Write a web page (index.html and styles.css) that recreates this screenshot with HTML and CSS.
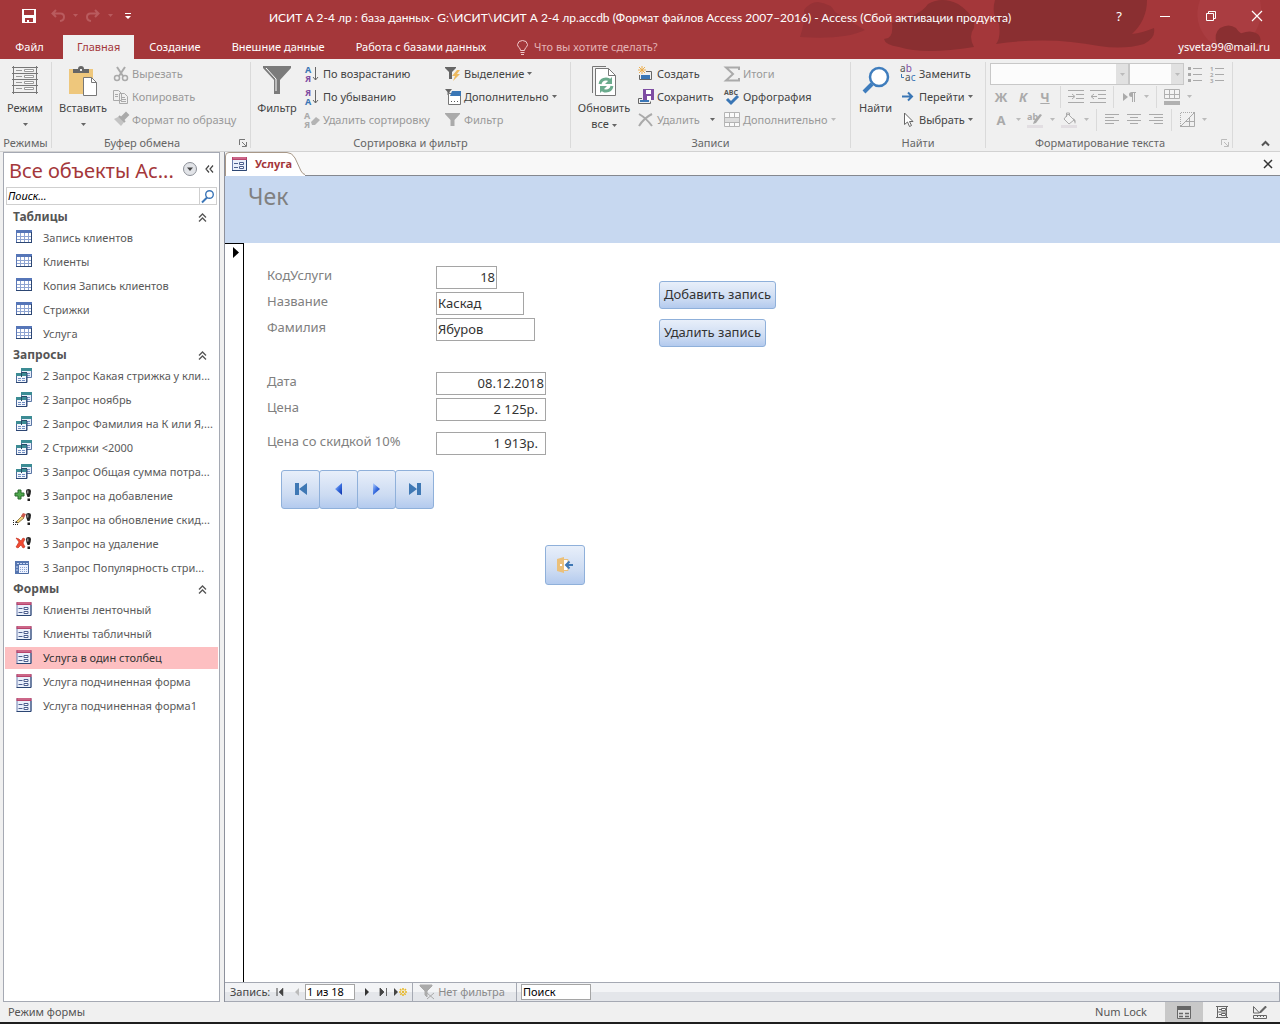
FILE: index.html
```html
<!DOCTYPE html>
<html lang="ru">
<head>
<meta charset="utf-8">
<title>ИСИТ А 2-4 лр - Access</title>
<link rel="stylesheet" href="styles.css">
</head>
<body>
<svg class="sprite" aria-hidden="true">
  <defs>
    <linearGradient id="g-sheet" x1="0" y1="0" x2="1" y2="1"><stop offset="0" stop-color="#fff"/><stop offset="1" stop-color="#c3d0ee"/></linearGradient>
    <linearGradient id="g-arrow" x1="0" y1="0" x2="1" y2="1"><stop offset="0" stop-color="#b9d3ff"/><stop offset=".5" stop-color="#3a6fe0"/><stop offset="1" stop-color="#0b2fa8"/></linearGradient>
  </defs>
  <symbol id="drop" viewBox="0 0 5 3"><path d="M0 0h5L2.5 3z" fill="currentColor"/></symbol>
  <symbol id="table" viewBox="0 0 16 14"><path d="M.5.500h15v12h-15z" fill="#fff" stroke="#5b77b5"/><path d="M0 0h16v3H0z" fill="#5676b8"/><path d="M1 6.500h14M1 9.500h14M4.500 3v10M8.500 3v10M12.500 3v10" stroke="#8ea4d2"/><path d="M0 12.500h16M15.500 2v11" stroke="#2c4673"/></symbol>
  <symbol id="query" viewBox="0 0 16 15"><path d="M5.500.500h10v9h-10z" fill="#e6edf9" stroke="#5b77a5"/><path d="M5 0h11v3H5z" fill="#3c8c94"/><path d="M10 5.500h4M10 7.500h4" stroke="#7b96c8"/><path d="M.5 5.500h10v9H.5z" fill="#f2f6fc" stroke="#4e6a9a"/><path d="M0 5h11v3H0z" fill="#3c8c94"/><path d="M2 10.500h3M6 10.500h3M2 12.500h3M6 12.500h3" stroke="#6f8cc2"/><path d="M5.500 9V4.500H11" fill="none" stroke="#274a66"/><path d="M0 14.500h11V5" fill="none" stroke="#2c4673"/></symbol>
  <symbol id="form" viewBox="0 0 15 14"><path d="M.5.500h14v13H.5z" fill="#eaf0fb" stroke="#6d7fae"/><path d="M0 0h15v3H0z" fill="#b8446c"/><path d="M1 1h13" stroke="#e08aa5"/><path d="M2 6.500h4M2 10.500h4" stroke="#4d5f8e"/><path d="M7.500 5.500h4v2h-4zM7.500 9.500h4v2h-4z" fill="#fff" stroke="#4d5f8e"/><path d="M0 13.500h14.500V3" fill="none" stroke="#2c4673"/></symbol>
  <symbol id="bang" viewBox="0 0 5 12"><path d="M0 2Q0 0 2.500 0T5 2Q5 5 3.500 8h-2Q0 5 0 2z" fill="#222"/><path d="M1 1.500h1.500v3H1z" fill="#8a8a8a"/><path d="M1.500 9.500h2.500v2.500H1.500z" fill="#222"/></symbol>
  <symbol id="q-add" viewBox="0 0 18 14"><path d="M5 2h3v3h3v3H8v3H5V8H2V5h3z" fill="#4fa84c" stroke="#2a6a2e"/><use href="#bang" x="13" y="1" width="5" height="12"/></symbol>
  <symbol id="q-upd" viewBox="0 0 18 14"><path d="M0 8.500h1M0 10.500h1M0 12.500h1M2 12.500h1M4 12.500h1" stroke="#222"/><path d="M3 10l6-6 2 2-6 5z" fill="#f1d27a" stroke="#7b6432" stroke-width=".8"/><path d="M8 4l2-3 3 1-2 4z" fill="#cc5a4d"/><path d="M2 11l1-2 2 2z" fill="#333"/><use href="#bang" x="13" y="1" width="5" height="12"/></symbol>
  <symbol id="q-del" viewBox="0 0 18 14"><path d="M3 2l3 1 2 2 2-3 2 1-2 4 2 4-2 1-2-3-3 3-2-1 3-5z" fill="#f04a32" stroke="#c02818" stroke-width=".6"/><use href="#bang" x="13" y="1" width="5" height="12"/></symbol>
  <symbol id="q-cross" viewBox="0 0 18 13"><path d="M2.500.500h13v12H2.500z" fill="#eef3ff" stroke="#49689f"/><path d="M2 0h14v4H6v9H2z" fill="#5676b0"/><path d="M4 2.500h11M4 5v6" stroke="#c8d8f4" stroke-dasharray="2 1"/><path d="M7 6.500h7M7 8.500h7M7 10.500h7" stroke="#8aa3d2" stroke-dasharray="1 1"/></symbol>
  <symbol id="collapse" viewBox="0 0 9 9"><path d="M1 4.500l3.500-3.500L8 4.500M1 8.500L4.500 5 8 8.500" fill="none" stroke="#555" stroke-width="1.300"/></symbol>
  <symbol id="launcher" viewBox="0 0 8 8"><path d="M.5 6V.500H6M3 3l4 4M7.500 3v4.500H3" fill="none" stroke="currentColor"/></symbol>
</svg>

<header class="app-head">
  <svg class="clouds" viewBox="0 0 500 59" aria-hidden="true">
    <path fill="#aa3d41" d="M420 0h60q5 25-12 40t-40 0q-16-18-8-40z"/>
    <path fill="#963236" d="M20 37q6-18 4-27Q30 2 38 2q14 2 17 10l30 18q-20 10-65 7z"/>
    <path fill="#8a2f31" d="M104 39q10 0 8-16Q140 16 148 4q14-8 30 0 18 12 16 24-6 8 0 19-50 8-75 0-14-2-15-8z"/>
    <path fill="#8a2f31" d="M216 44q5-6 3-20-8-10-4-24h152q0 20-15 34 10-1 22-6 2 10-10 16-20 6-45 2-50-10-103-2z"/>
    <path fill="#8a2f31" d="M437 44q-4-10 3-16 9-5 16 0 4 6 6 5 8-3 14 0 6 3 4 10-22 8-43 1z"/>
  </svg>
  <div class="title-bar">
    <div class="quick">
      <button class="q-btn q-save" aria-label="Сохранить"><svg width="14" height="14" viewBox="0 0 14 14"><path fill="#fff" fill-rule="evenodd" d="M0 0h14v14H0zM2 1v5h10V1zM3 9v4h2v-2h2v2h4V9z"/></svg></button>
      <button class="q-btn dim" aria-label="Отменить"><svg width="14" height="13" viewBox="0 0 14 13"><path d="M5 1L1.500 4.500 5 8M2 4.500h7.500q3.500 0 3.500 3.500T9 12" fill="none" stroke="currentColor" stroke-width="2"/></svg></button>
      <button class="q-arrow dim" aria-label="Список отмены"><svg width="5" height="3"><use href="#drop"/></svg></button>
      <button class="q-btn dim" aria-label="Вернуть"><svg width="14" height="13" viewBox="0 0 14 13"><path d="M9 1l3.500 3.500L9 8M12 4.500H4.500Q1 4.500 1 8t4 4" fill="none" stroke="currentColor" stroke-width="2"/></svg></button>
      <button class="q-arrow dim" aria-label="Список возврата"><svg width="5" height="3"><use href="#drop"/></svg></button>
      <button class="q-btn" aria-label="Настройка панели"><svg width="6" height="6" viewBox="0 0 6 6"><path fill="#fff" d="M0 0h6v1H0zM0 3h6L3 6z"/></svg></button>
    </div>
    <h1 class="app-title">ИСИТ А 2-4 лр : база данных- G:\ИСИТ\ИСИТ А 2-4 лр.accdb (Формат файлов Access 2007–2016) - Access (Сбой активации продукта)</h1>
    <div class="win">
      <button>?</button>
      <button aria-label="Свернуть"><svg width="10" height="10"><path d="M0 5.500h10" stroke="#fff"/></svg></button>
      <button aria-label="Восстановить"><svg width="10" height="10" viewBox="0 0 10 10"><path d="M.5 2.500h7v7h-7zM2.500 2.500v-2h7v7h-2" fill="none" stroke="#fff"/></svg></button>
      <button aria-label="Закрыть"><svg width="10" height="10"><path d="M0 0l10 10M10 0L0 10" stroke="#fff" stroke-width="1.200"/></svg></button>
    </div>
  </div>
  <nav class="tabs">
    <button class="tab file">Файл</button>
    <button class="tab on">Главная</button>
    <button class="tab">Создание</button>
    <button class="tab">Внешние данные</button>
    <button class="tab">Работа с базами данных</button>
    <button class="tab tell"><svg width="11" height="15" viewBox="0 0 11 15"><path d="M3.500 10.500Q3.500 9 2 7.500.500 6 .500 4.500 1 .500 5.500.500t5 4Q10.500 6 9 7.500 7.500 9 7.500 10.500zM3.500 12.500h4M4 14.500h3" fill="none" stroke="#f0c8ca"/></svg>Что вы хотите сделать?</button>
    <a class="account" href="#">ysveta99@mail.ru</a>
  </nav>
</header>

<section class="ribbon">
  <div class="group g-modes">
    <div class="tools">
      <button class="big"><svg width="26" height="28" viewBox="0 0 26 28"><path d="M1.500 0v28M24.500 0v28M0 1.500h26M0 7.500h26M0 13.500h26M0 19.500h26M0 26.500h26" stroke="#777"/><path d="M4 4.500h6M4 10.500h6M4 16.500h6M4 22.500h6" stroke="#999"/><path d="M12.500 3.500h9v2h-9zM12.500 9.500h9v2h-9zM12.500 15.500h9v2h-9zM12.500 21.500h9v2h-9z" fill="#fff" stroke="#999"/></svg><span>Режим</span><svg class="d" width="5" height="3"><use href="#drop"/></svg></button>
    </div>
    <h2>Режимы</h2>
  </div>

  <div class="group g-clip">
    <div class="tools">
      <button class="big"><svg width="28" height="30" viewBox="0 0 28 30"><path d="M0 3h24v25H0z" fill="#eec77c"/><path d="M4 7V3h5Q9 0 12 0t3 3h5v4z" fill="#666"/><path d="M11 3h2v2h-2z" fill="#eee"/><path d="M14.500 11.500h8l5 5v13h-13z" fill="#fff" stroke="#777"/><path d="M22.500 11.500v5h5" fill="none" stroke="#777"/></svg><span>Вставить</span><svg class="d" width="5" height="3"><use href="#drop"/></svg></button>
      <div class="stack">
        <button class="small" disabled><svg width="16" height="16" viewBox="0 0 16 16"><path d="M4 1l6 9M12 1l-6 9" stroke="#aaa" stroke-width="2"/><circle cx="4" cy="12" r="2.500" fill="none" stroke="#aaa" stroke-width="1.500"/><circle cx="12" cy="12" r="2.500" fill="none" stroke="#aaa" stroke-width="1.500"/></svg>Вырезать</button>
        <button class="small" disabled><svg width="16" height="16" viewBox="0 0 16 16"><path d="M.5 1.500h5l3 3v7h-8zM6.500 4.500h5l3 3v7h-8z" fill="#f0f0f0" stroke="#aaa"/><path d="M2 5.500h3M2 7.500h3M8 8.500h4M8 10.500h5M8 12.500h5" stroke="#aaa"/></svg>Копировать</button>
        <button class="small" disabled><svg width="16" height="16" viewBox="0 0 16 16"><path d="M1 7l6-3 5 5-4 5z" fill="#c4c4c4"/><path d="M9 5l4-4 2 2-4 4zM6 4l6 6" stroke="#aaa" stroke-width="2" fill="#aaa"/></svg>Формат по образцу</button>
      </div>
    </div>
    <h2>Буфер обмена</h2>
    <button class="launch" aria-label="Буфер обмена: параметры"><svg width="8" height="8"><use href="#launcher"/></svg></button>
  </div>

  <div class="group g-sort">
    <div class="tools">
      <button class="big"><svg width="28" height="28" viewBox="0 0 28 28"><path d="M0 0h28v2L17 14v14h-6V14L0 2z" fill="#7b7b7b"/><path d="M3 2l10 11v12" fill="none" stroke="#fff"/></svg><span>Фильтр</span></button>
      <div class="stack s-sort">
        <button class="small"><svg width="16" height="18" viewBox="0 0 16 18"><text class="gl blue" x="1" y="8">А</text><text class="gl violet" x="1" y="17">Я</text><path d="M11.500 2v13M9 12l2.500 3L14 12" fill="none" stroke="#666"/></svg>По возрастанию</button>
        <button class="small"><svg width="16" height="18" viewBox="0 0 16 18"><text class="gl violet" x="1" y="8">Я</text><text class="gl blue" x="1" y="17">А</text><path d="M11.500 2v13M9 12l2.500 3L14 12" fill="none" stroke="#666"/></svg>По убыванию</button>
        <button class="small" disabled><svg width="16" height="18" viewBox="0 0 16 18"><text class="gl grey" x="0" y="8">А</text><text class="gl grey" x="0" y="17">Я</text><path d="M7 11l5-5 4 3-5 5H8z" fill="#b4b4b4"/></svg>Удалить сортировку</button>
      </div>
      <div class="stack">
        <button class="small"><svg width="16" height="16" viewBox="0 0 16 16"><path d="M0 1h11v1L7 6v7H4V6L0 2z" fill="#666"/><path d="M12 4l-5 6h3l-2 5 7-7h-3l3-4z" fill="#edb95e"/></svg>Выделение<svg class="d" width="5" height="3"><use href="#drop"/></svg></button>
        <button class="small"><svg width="16" height="16" viewBox="0 0 16 16"><path d="M0 0h7L4.500 3v3h-2V3z" fill="#666"/><path d="M3.500 4.500h12v11h-12z" fill="#fff" stroke="#777"/><path d="M7 2h9v5H5z" fill="#3a76b5"/><path d="M6 12.500h1M9 12.500h1M12 12.500h1" stroke="#555"/></svg>Дополнительно<svg class="d" width="5" height="3"><use href="#drop"/></svg></button>
        <button class="small" disabled><svg width="16" height="16" viewBox="0 0 16 16"><path d="M0 1h15v1L9.500 8v6h-4V8L0 2z" fill="#aaa"/></svg>Фильтр</button>
      </div>
    </div>
    <h2>Сортировка и фильтр</h2>
  </div>

  <div class="group g-rec">
    <div class="tools">
      <button class="big"><svg width="24" height="30" viewBox="0 0 24 30"><path d="M.5 27V.500H14" fill="none" stroke="#777"/><path d="M3.500 2.500h13l7 7v20h-20z" fill="#fff" stroke="#777"/><path d="M16.500 2.500v7h7" fill="none" stroke="#777"/><path d="M8 18q1-5 6-5 3 0 4 2M20 20q-1 5-6 5-3 0-4-2" fill="none" stroke="#6bab8d" stroke-width="3"/><path d="M20 11v7h-7zM8 27v-7h7z" fill="#6bab8d"/></svg><span>Обновить<br>все <svg class="d" width="5" height="3"><use href="#drop"/></svg></span></button>
      <div class="stack s-rec">
        <button class="small"><svg width="16" height="16" viewBox="0 0 16 16"><path d="M4 0v8M0 4h8M1 1l6 6M7 1L1 7" stroke="#ecae4e"/><path d="M8 5.500h5.500v8h-12V9" fill="none" stroke="#666"/><path d="M3 9h9v4H3z" fill="#3a76b5"/></svg>Создать</button>
        <button class="small"><svg width="16" height="16" viewBox="0 0 16 16"><path d="M5 0h11v11H5z" fill="#7e4da3"/><path d="M8 1h5v4H8zM9 7h4v4H9z" fill="#fff"/><path d="M4 9.500H.500v5h12v-2" fill="none" stroke="#666"/><path d="M2 11h9v2H2z" fill="#3a76b5"/></svg>Сохранить</button>
        <button class="small" disabled><svg width="16" height="16" viewBox="0 0 16 16"><path d="M1 2q7 4 13 12M14 2Q6 6 1 14" fill="none" stroke="#aaa" stroke-width="2"/></svg>Удалить<svg class="d dark" width="5" height="3"><use href="#drop"/></svg></button>
      </div>
      <div class="stack">
        <button class="small" disabled><svg width="16" height="16" viewBox="0 0 16 16"><path d="M15 4V1.500H2L9 8l-7 6.500h13V12" fill="none" stroke="#aaa" stroke-width="2"/></svg>Итоги</button>
        <button class="small"><svg width="16" height="18" viewBox="0 0 16 18"><text class="abc" x="0" y="7">ABC</text><path d="M3 11l4 4 7-7" fill="none" stroke="#3a76b5" stroke-width="3"/></svg>Орфография</button>
        <button class="small" disabled><svg width="16" height="15" viewBox="0 0 16 15"><path d="M.5.500h15v14H.5zM0 5.500h16M0 10.500h16M5.500 0v5M10.500 0v5M5.500 10v5M10.500 10v5" fill="#fafafa" stroke="#b4b4b4"/><path d="M1 6h14v4H1z" fill="#ddd"/></svg>Дополнительно<svg class="d" width="5" height="3"><use href="#drop"/></svg></button>
      </div>
    </div>
    <h2>Записи</h2>
  </div>

  <div class="group g-find">
    <div class="tools">
      <button class="big"><svg width="28" height="28" viewBox="0 0 28 28"><circle cx="17" cy="11" r="9" fill="#fff" stroke="#3f7dbd" stroke-width="2.500"/><path d="M10 18l-8 8" stroke="#3f7dbd" stroke-width="4"/></svg><span>Найти</span></button>
      <div class="stack">
        <button class="small"><svg width="16" height="18" viewBox="0 0 16 18"><text class="ab" x="0" y="7">a<tspan fill="#7e4da3">b</tspan></text><text class="ab" x="5" y="16">a<tspan fill="#3a76b5">c</tspan></text><path d="M1.500 9v3.500H4" fill="none" stroke="#3a76b5"/></svg>Заменить</button>
        <button class="small"><svg width="16" height="16" viewBox="0 0 16 16"><path d="M2 7.500h10M8 3.500l4 4-4 4" fill="none" stroke="#3a76b5" stroke-width="2"/></svg>Перейти<svg class="d" width="5" height="3"><use href="#drop"/></svg></button>
        <button class="small"><svg width="16" height="16" viewBox="0 0 16 16"><path d="M4.500 1v11.500l3-2.500 2 4.500 2-1-2-4h3.500z" fill="#fff" stroke="#666"/></svg>Выбрать<svg class="d" width="5" height="3"><use href="#drop"/></svg></button>
      </div>
    </div>
    <h2>Найти</h2>
  </div>

  <div class="group g-text">
    <div class="format">
      <div class="frow">
        <label class="combo c-font"><select disabled aria-label="Шрифт"><option></option></select><svg class="d" width="5" height="3"><use href="#drop"/></svg></label>
        <label class="combo c-size"><select disabled aria-label="Размер"><option></option></select><svg class="d" width="5" height="3"><use href="#drop"/></svg></label>
        <button class="f" disabled aria-label="Маркеры"><svg width="14" height="16" viewBox="0 0 14 16"><path d="M5 2.500h9M5 8.500h9M5 14.500h9" stroke="#aaa"/><path d="M0 1h3v3H0zM0 7h3v3H0zM0 13h3v3H0z" fill="#aaa"/></svg></button>
        <button class="f" disabled aria-label="Нумерация"><svg width="14" height="18" viewBox="0 0 14 18"><path d="M5 3.500h9M5 9.500h9M5 15.500h9" stroke="#aaa"/><text class="num" x="0" y="6">1</text><text class="num" x="0" y="12">2</text><text class="num" x="0" y="18">3</text></svg></button>
      </div>
      <div class="frow">
        <button class="f" disabled><b>Ж</b></button><button class="f" disabled><b><i>К</i></b></button><button class="f" disabled><b><u>Ч</u></b></button>
        <i class="sep"></i>
        <button class="f" disabled aria-label="Увеличить отступ"><svg width="16" height="13" viewBox="0 0 16 13"><path d="M0 .500h16M8 4.500h8M8 8.500h8M0 12.500h16M0 6.500h6M4 4l3 2.500L4 9" fill="none" stroke="#aaa"/></svg></button>
        <button class="f" disabled aria-label="Уменьшить отступ"><svg width="16" height="13" viewBox="0 0 16 13"><path d="M0 .500h16M8 4.500h8M8 8.500h8M0 12.500h16M1 6.500h6M4 4L1 6.500 4 9" fill="none" stroke="#aaa"/></svg></button>
        <i class="sep"></i>
        <button class="f" disabled aria-label="Направление"><svg width="13" height="10" viewBox="0 0 13 10"><path d="M0 1l5 4-5 4zM9 5Q6 5 6 2.500T9 0h4v1h-1v9h-1V1h-1v9H9z" fill="#aaa"/></svg></button><button class="fd" disabled aria-label="Список"><svg width="5" height="3"><use href="#drop"/></svg></button>
        <i class="sep"></i>
        <button class="f" disabled aria-label="Сетка"><svg width="16" height="16" viewBox="0 0 16 16"><path d="M.5.500h15v9H.5zM0 5.500h16M5.500 0v10M10.500 0v10" fill="#f4f4f4" stroke="#b0b0b0"/><path d="M0 12h16v4H0z" fill="#b0b0b0"/></svg></button><button class="fd" disabled aria-label="Список"><svg width="5" height="3"><use href="#drop"/></svg></button>
      </div>
      <div class="frow">
        <button class="f" disabled><b>A</b></button><button class="fd" disabled aria-label="Список"><svg width="5" height="3"><use href="#drop"/></svg></button>
        <button class="f" disabled aria-label="Выделение цветом"><svg width="16" height="18" viewBox="0 0 16 18"><text class="ab2" x="0" y="9">ab</text><path d="M15 4l-6 8-3 1 1-3 6-7z" fill="#aaa"/><path d="M0 14h16v3H0z" fill="#e2dee2"/></svg></button><button class="fd" disabled aria-label="Список"><svg width="5" height="3"><use href="#drop"/></svg></button>
        <button class="f" disabled aria-label="Цвет фона"><svg width="16" height="18" viewBox="0 0 16 18"><path d="M7 3l6 6-5 4-5-5zM5.500 6V2h3v3" fill="#f4f4f4" stroke="#aaa"/><path d="M12 7q4 2 2 6z" fill="#aaa"/><path d="M0 14h16v3H0z" fill="#e2dee2"/></svg></button><button class="fd" disabled aria-label="Список"><svg width="5" height="3"><use href="#drop"/></svg></button>
        <i class="sep"></i>
        <button class="f" disabled aria-label="По левому краю"><svg width="14" height="11"><path d="M0 .500h14M0 3.500h9M0 6.500h14M0 9.500h9" stroke="#aaa"/></svg></button>
        <button class="f" disabled aria-label="По центру"><svg width="14" height="11"><path d="M0 .500h14M3 3.500h8M0 6.500h14M3 9.500h8" stroke="#aaa"/></svg></button>
        <button class="f" disabled aria-label="По правому краю"><svg width="14" height="11"><path d="M0 .500h14M5 3.500h9M0 6.500h14M5 9.500h9" stroke="#aaa"/></svg></button>
        <i class="sep"></i>
        <button class="f" disabled aria-label="Условное форматирование"><svg width="15" height="15" viewBox="0 0 15 15"><path d="M.5 14V.500H14" fill="none" stroke="#aaa" stroke-dasharray="1 1"/><path d="M0 14.500h14.500V0M1 14L14 1M9.500 6v8M6 9.500h8" fill="none" stroke="#aaa"/></svg></button><button class="fd" disabled aria-label="Список"><svg width="5" height="3"><use href="#drop"/></svg></button>
      </div>
    </div>
    <h2>Форматирование текста</h2>
    <button class="launch faint" aria-label="Форматирование: параметры"><svg width="8" height="8"><use href="#launcher"/></svg></button>
  </div>
  <div class="ribbon-end"><button aria-label="Свернуть ленту"><svg width="9" height="6"><path d="M1 5.500L4.500 2 8 5.500" fill="none" stroke="#555" stroke-width="2"/></svg></button></div>
</section>

<main class="work">
  <aside class="pane">
    <div class="pane-head">
      <h2>Все объекты Ac...</h2>
      <button aria-label="Категории"><svg width="14" height="14" viewBox="0 0 14 14"><circle cx="7" cy="7" r="6.500" fill="#e2e4e8" stroke="#8c9098"/><path d="M4 5.500h6L7 9z" fill="#444"/></svg></button>
      <button aria-label="Скрыть"><svg width="9" height="8" viewBox="0 0 9 8"><path d="M4 .500L1 4l3 3.500M8 .500L5 4l3 3.500" fill="none" stroke="#444" stroke-width="1.200"/></svg></button>
    </div>
    <div class="search">
      <input type="text" placeholder="Поиск..." aria-label="Поиск объектов">
      <button aria-label="Найти"><svg width="14" height="13" viewBox="0 0 14 13"><circle cx="8.500" cy="4.500" r="3.800" fill="#fff" stroke="#3c76b8" stroke-width="1.400"/><path d="M6 7.500l-5 5" stroke="#3c76b8" stroke-width="2"/></svg></button>
    </div>
    <h3>Таблицы <svg width="9" height="9"><use href="#collapse"/></svg></h3>
    <ul>
      <li><a href="#"><svg width="16" height="14"><use href="#table"/></svg>Запись клиентов</a></li>
      <li><a href="#"><svg width="16" height="14"><use href="#table"/></svg>Клиенты</a></li>
      <li><a href="#"><svg width="16" height="14"><use href="#table"/></svg>Копия Запись клиентов</a></li>
      <li><a href="#"><svg width="16" height="14"><use href="#table"/></svg>Стрижки</a></li>
      <li><a href="#"><svg width="16" height="14"><use href="#table"/></svg>Услуга</a></li>
    </ul>
    <h3>Запросы <svg width="9" height="9"><use href="#collapse"/></svg></h3>
    <ul>
      <li><a href="#"><svg width="16" height="15"><use href="#query"/></svg>2 Запрос Какая стрижка у кли...</a></li>
      <li><a href="#"><svg width="16" height="15"><use href="#query"/></svg>2 Запрос ноябрь</a></li>
      <li><a href="#"><svg width="16" height="15"><use href="#query"/></svg>2 Запрос Фамилия на К или Я,...</a></li>
      <li><a href="#"><svg width="16" height="15"><use href="#query"/></svg>2 Стрижки &lt;2000</a></li>
      <li><a href="#"><svg width="16" height="15"><use href="#query"/></svg>3 Запрос Общая сумма потра...</a></li>
      <li><a class="act" href="#"><svg width="18" height="14"><use href="#q-add"/></svg>3 Запрос на добавление</a></li>
      <li><a class="act" href="#"><svg width="18" height="14"><use href="#q-upd"/></svg>3 Запрос на обновление скид...</a></li>
      <li><a class="act" href="#"><svg width="18" height="14"><use href="#q-del"/></svg>3 Запрос на удаление</a></li>
      <li><a class="act" href="#"><svg width="18" height="13"><use href="#q-cross"/></svg>3 Запрос Популярность стри...</a></li>
    </ul>
    <h3>Формы <svg width="9" height="9"><use href="#collapse"/></svg></h3>
    <ul>
      <li><a href="#"><svg width="16" height="14"><use href="#form"/></svg>Клиенты ленточный</a></li>
      <li><a href="#"><svg width="16" height="14"><use href="#form"/></svg>Клиенты табличный</a></li>
      <li><a class="sel" href="#"><svg width="16" height="14"><use href="#form"/></svg>Услуга в один столбец</a></li>
      <li><a href="#"><svg width="16" height="14"><use href="#form"/></svg>Услуга подчиненная форма</a></li>
      <li><a href="#"><svg width="16" height="14"><use href="#form"/></svg>Услуга подчиненная форма1</a></li>
    </ul>
  </aside>

  <section class="doc">
    <div class="doc-tabs">
      <button class="doc-tab"><svg class="shape" width="80" height="24" viewBox="0 0 80 24" aria-hidden="true"><path d="M.5 24V4Q.500.500 4 .500H62Q67 .500 70 6L76 19Q78 22.500 80 22.500V24z" fill="#fff"/><path d="M.5 24V4Q.500.500 4 .500H62Q67 .500 70 6L76 19Q78 22.500 80 22.500" fill="none" stroke="#a89888"/></svg><svg width="15" height="14"><use href="#form"/></svg><span>Услуга</span></button>
      <button class="doc-close" aria-label="Закрыть форму"><svg width="8" height="8"><path d="M0 0l8 8M8 0L0 8" stroke="#333" stroke-width="1.500"/></svg></button>
    </div>
    <div class="form-head">Чек</div>
    <div class="form-body">
      <div class="selector"><svg width="6" height="11"><path d="M0 0l6 5.500L0 11z" fill="#000"/></svg></div>
      <form class="record">
        <div class="record-top">
          <div class="fields">
            <label for="f1">КодУслуги</label><input id="f1" class="w1 r" value="18">
            <label for="f2">Название</label><input id="f2" class="w2" value="Каскад">
            <label for="f3">Фамилия</label><input id="f3" class="w3" value="Ябуров">
            <div class="space"></div>
            <label for="f4">Дата</label><input id="f4" class="w4 r" value="08.12.2018">
            <label for="f5">Цена</label><input id="f5" class="w4 r money" value="2 125р.">
            <div class="space half"></div>
            <label for="f6">Цена со скидкой 10%</label><input id="f6" class="w4 r money" value="1 913р.">
          </div>
          <div class="actions">
            <button type="button" class="cmd">Добавить запись</button>
            <button type="button" class="cmd">Удалить запись</button>
          </div>
        </div>
        <div class="moves">
          <button type="button" aria-label="Первая"><svg width="12" height="12"><path d="M0 0h4v12H0zM12 0v12L4 6z" fill="#3f78b4"/></svg></button>
          <button type="button" aria-label="Предыдущая"><svg width="7" height="12"><path d="M7 0v12L0 6z" fill="url(#g-arrow)"/></svg></button>
          <button type="button" aria-label="Следующая"><svg width="7" height="12"><path d="M0 0v12l7-6z" fill="url(#g-arrow)"/></svg></button>
          <button type="button" aria-label="Последняя"><svg width="12" height="12"><path d="M8 0h4v12H8zM0 0v12l8-6z" fill="#3f78b4"/></svg></button>
        </div>
        <button type="button" class="exit" aria-label="Закрыть"><svg width="16" height="16" viewBox="0 0 16 16"><path d="M7 2.500h4v11H7" fill="#fff" stroke="#ebc07a"/><path d="M0 2l7-2v16l-7-2z" fill="#ebc07a"/><path d="M3 7h2v2H3z" fill="#fff"/><path d="M16 8H10M12.500 4.500L9 8l3.500 3.500" fill="none" stroke="#3f78b4" stroke-width="2"/></svg></button>
      </form>
    </div>
    <div class="recbar">
      <span class="rb-label">Запись:</span>
      <button aria-label="Первая запись"><svg width="7" height="8"><path d="M.5 0v8M1.500 0v8M7 0v8L3 4z" fill="#444" stroke="#444" stroke-width=".5"/></svg></button>
      <button aria-label="Предыдущая запись"><svg width="4" height="8"><path d="M4 0v8L0 4z" fill="#bbb"/></svg></button>
      <input class="rb-pos" value="1 из 18" aria-label="Номер записи">
      <button aria-label="Следующая запись"><svg width="4" height="8"><path d="M0 0v8l4-4z" fill="#333"/></svg></button>
      <button aria-label="Последняя запись"><svg width="7" height="8"><path d="M6.500 0v8M0 0v8l4-4z" fill="#444" stroke="#444" stroke-width=".8"/></svg></button>
      <button aria-label="Новая запись"><svg width="13" height="8"><path d="M0 0v8l4-4z" fill="#444"/><path d="M9 0v8M5 4h8M6 1l6 6M12 1L6 7" stroke="#e8b828" stroke-width="1.500" stroke-dasharray="2 1"/></svg></button>
      <button class="rb-filter" disabled><svg width="15" height="15" viewBox="0 0 15 15"><path d="M0 0h12v1L7 6v6L5 10V6L0 1zM7 8l7 6M14 8l-7 6" fill="#aaa" stroke="#aaa"/></svg>Нет фильтра</button>
      <input class="rb-search" value="Поиск" aria-label="Поиск записи">
    </div>
  </section>
</main>

<footer class="status">
  <span class="mode">Режим формы</span>
  <span class="num-lock">Num Lock</span>
  <button class="on" aria-label="Режим формы"><svg width="14" height="13" viewBox="0 0 14 13"><path d="M.5.500h13v12H.5z" fill="#ddd" stroke="#666"/><path d="M0 0h14v4H0z" fill="#666"/><path d="M2 7.500h4M2 10.500h4M8 7.500h4M8 10.500h4" stroke="#666" stroke-width="1.500"/></svg></button>
  <button aria-label="Режим макета"><svg width="12" height="12" viewBox="0 0 12 12"><path d="M1.500 0v12M10.500 0v12M0 .500h12M0 11.500h12M3 3.500h3M3 8.500h3M2 6h8" stroke="#666" fill="none"/><path d="M5.500 2.500h4v2h-4zM5.500 7.500h4v2h-4z" fill="#fff" stroke="#666"/></svg></button>
  <button aria-label="Конструктор"><svg width="14" height="13" viewBox="0 0 14 13"><path d="M.5.500l6 6.500h-6zM7 6l6-6M.500 9.500h13v3H.5zM4.500 10v1M7.500 10v1M10.500 10v1" fill="none" stroke="#666"/><path d="M7 5l5-5 2 1-6 6H6z" fill="#666"/></svg></button>
</footer>
</body>
</html>
```
FILE: styles.css
```css
* { box-sizing: border-box; }
body {
  margin: 0;
  min-height: 100vh;
  display: flex;
  flex-direction: column;
  border-bottom: 2px solid #1e1e1e;
  background: #f0f0f0;
  color: #444;
  font: 11px/16px "Noto Sans", "Open Sans", sans-serif;
}
h1, h2, h3, ul { margin: 0; padding: 0; font: inherit; list-style: none; }
button, input, select { margin: 0; padding: 0; border: 0; background: none; color: inherit; font: inherit; border-radius: 0; }
button { display: flex; align-items: center; justify-content: center; white-space: nowrap; }
svg { flex: none; display: block; overflow: visible; }
a { color: inherit; text-decoration: none; }
.sprite { position: absolute; width: 0; height: 0; overflow: hidden; }

/* Title bar and tabs */
.app-head { position: relative; background: #a4373a; color: #fff; }
.clouds { position: absolute; right: 0; top: 0; width: 500px; height: 59px; overflow: hidden; }
.title-bar { position: relative; display: grid; grid-template-columns: 1fr auto 1fr; height: 35px; }
.quick { display: flex; align-items: center; padding: 0 0 4px 18px; }
.q-btn { width: 22px; height: 22px; }
.q-save { margin-right: 7px; }
.q-arrow { width: 13px; height: 22px; }
.dim { color: #b95b5e; }
.app-title { font: 12px/35px Lato, "Noto Sans", sans-serif; white-space: nowrap; }
.win { display: flex; justify-content: flex-end; }
.win button { width: 46px; height: 31px; font-size: 13px; }
.tabs { position: relative; display: flex; height: 24px; }
.tab { padding: 0 16px 0 15px; }
.tab.file { width: 63px; padding: 0 4px 0 0; }
.tab.on { padding: 0 14px; background: #f0f0f0; color: #a4373a; }
.tell { gap: 6px; color: #e3b4b6; }
.account { margin-left: auto; padding-right: 10px; line-height: 24px; }

/* Ribbon */
.ribbon { display: grid; grid-template-columns: 52px 199px 320px 280px 135px 247px 1fr; height: 93px; padding-top: 3px; border-bottom: 1px solid #d2d2d2; }
.group { position: relative; height: 86px; border-right: 1px solid #dadada; }
.tools { display: flex; height: 72px; }
.group h2 { color: #666; line-height: 18px; text-align: center; height: 14px; }
.g-clip h2, .g-text h2 { padding-right: 18px; }
.launch { position: absolute; right: 2px; bottom: 0; width: 10px; height: 10px; color: #777; }
.faint { color: #bbb; }
.big { flex-direction: column; justify-content: flex-start; width: 50px; padding-top: 4px; }
.big > svg:first-child { margin-bottom: auto; }
.big > span { height: 34px; text-align: center; }
.big > svg.d { margin-top: -11px; margin-bottom: 8px; }
.big > span svg { display: inline-block; vertical-align: middle; }
.d { color: #666; }
.g-clip .tools { padding-left: 4px; }
.g-clip .big { width: 54px; margin-right: 3px; }
.g-sort .big { width: 52px; margin-right: 1px; }
.g-rec .big { width: 60px; margin-left: 3px; margin-right: 4px; }
.g-find .big { width: 49px; }
.s-sort { width: 141px; }
.s-rec { width: 86px; }
.small { height: 23px; gap: 3px; }
.small:disabled { color: #999; }
.small:disabled .d { color: #bbb; }
.small:disabled .dark { margin-left: 7px; color: #666; }
.gl { font: bold 9px "Noto Sans", sans-serif; }
.blue { fill: #3a76b5; }
.violet { fill: #7e4da3; }
.grey { fill: #aaa; }
.abc { font: bold 7px "Noto Sans", sans-serif; fill: #555; }
.ab { font: 10px "Noto Sans", sans-serif; fill: #555; }
.ab2 { font: bold 9px "Noto Sans", sans-serif; fill: #aaa; }
.num { font: bold 6px "Noto Sans", sans-serif; fill: #aaa; }

.format { height: 72px; padding-left: 4px; }
.frow { display: flex; align-items: center; height: 23px; }
.f { width: 22px; height: 22px; }
.f, .fd { color: #aaa; font-size: 13px; }
.fd { width: 12px; height: 22px; color: #bbb; }
.sep { width: 1px; height: 22px; margin: 0 4px; background: #dadada; }
.combo { position: relative; display: flex; height: 22px; }
.combo select { width: 100%; appearance: none; opacity: 1; border: 1px solid #c8c8c8; background: linear-gradient(#e1e1e1, #e1e1e1) right / 12px 100% no-repeat #fcfcfc; }
.combo .d { position: absolute; right: 4px; top: 10px; color: #bbb; }
.c-font { width: 139px; }
.c-size { width: 55px; }
.ribbon-end { display: flex; align-items: flex-end; justify-content: flex-end; padding: 0 10px 3px 0; }
.ribbon-end button { height: 11px; }

/* Work area */
.work { flex: 1; display: grid; grid-template-columns: 217px 1fr; column-gap: 4px; padding-left: 3px; }
.pane { border: 1px solid #a5a9b3; background: #fff; }
.pane-head { display: flex; align-items: flex-start; gap: 8px; height: 34px; padding-left: 5px; }
.pane-head h2 { width: 166px; color: #a4373a; font-size: 20px; line-height: 35px; white-space: nowrap; }
.pane-head button { height: 32px; }
.search { display: flex; width: 211px; height: 18px; margin: 0 0 3px 2px; border: 1px solid #cfcfcf; }
.search input { flex: 1; min-width: 0; padding-left: 1px; font-style: italic; }
.search input::placeholder { color: #000; }
.search button { width: 17px; border-left: 1px solid #cfcfcf; }
.pane h3 { display: flex; align-items: center; justify-content: space-between; height: 18px; padding: 0 12px 0 9px; font-size: 12px; font-weight: 700; color: #555; }
.pane li { padding: 1px; }
.pane li a { display: flex; align-items: center; gap: 11px; height: 22px; padding-left: 11px; white-space: nowrap; color: #5a5a5a; }
.pane li svg { margin-bottom: 2px; }
.pane li a.act { gap: 12px; padding-left: 8px; }
.pane li a.sel { background: #fdbfc1; color: #333; }

.doc { display: flex; flex-direction: column; border-left: 1px solid #8d919c; background: #fff; }
.doc-tabs { display: flex; justify-content: space-between; height: 24px; border-bottom: 1px solid #85888f; background: #f8f8f8; }
.doc-tab { position: relative; width: 80px; height: 24px; justify-content: flex-start; gap: 8px; padding-left: 7px; color: #a4373a; font-weight: 700; }
.doc-tab > * { position: relative; }
.doc-tab .shape { position: absolute; left: 0; top: 0; }
.doc-close { width: 24px; height: 23px; }
.form-head { height: 67px; padding: 4px 23px; background: #c7d8f0; color: #808080; font-size: 23px; line-height: 33px; }
.form-body { flex: 1; display: flex; }
.selector { width: 19px; padding: 3px 0 0 8px; border-top: 1px solid #000; border-right: 1px solid #000; }
.record { flex: 1; padding: 23px 0 0 23px; font-size: 13px; line-height: 18px; }
.record-top { display: flex; gap: 113px; }
.fields { display: grid; grid-template-columns: 166px 110px; column-gap: 3px; row-gap: 3px; }
.fields label { color: #808080; }
.fields input { height: 23px; padding: 0 1px 2px; border: 1px solid #a5a5a5; background: #fff; color: #333; }
.fields .r { text-align: right; }
.fields .money { padding-right: 7px; }
.fields .w1 { width: 61px; }
.fields .w2 { width: 88px; }
.fields .w3 { width: 99px; }
.fields .w4 { width: 110px; }
.space { grid-column: 1 / -1; height: 25px; }
.space.half { height: 5px; }
.actions { display: flex; flex-direction: column; align-items: flex-start; gap: 10px; padding-top: 15px; }
.cmd, .moves button, .exit { border: 1px solid #8fb0da; border-radius: 3px; background: linear-gradient(#e8effa, #ccdbf2 65%, #b3caee); color: #333; }
.cmd { height: 28px; padding: 0 4px 2px; }
.moves { display: flex; margin: 15px 0 0 14px; }
.moves button { width: 39px; height: 39px; margin-right: -1px; padding-bottom: 2px; }
.exit { width: 40px; height: 40px; margin: 36px 0 0 278px; }

.recbar { display: flex; align-items: center; height: 20px; border: 1px solid #a5a9b3; border-left: 0; background: linear-gradient(#f3f4f6 50%, #e4e6ea 50%); }
.recbar button { width: 17px; }
.rb-label { width: 46px; padding-left: 5px; }
.recbar input { height: 16px; padding: 0 1px; border: 1px solid #a5a5a5; background: #fff; color: #000; }
.recbar .rb-pos { width: 50px; margin: 0 3px 0 0; }
.recbar .rb-filter { width: 105px; height: 18px; gap: 3px; padding-right: 4px; margin: 0 4px 0 3px; border: solid #a5a9b3; border-width: 0 1px; color: #8a8a8a; }
.rb-search { width: 70px; }

/* Status bar */
.status { display: flex; align-items: center; height: 20px; padding: 0 1px 0 8px; color: #555; }
.num-lock { margin: 0 18px 0 auto; }
.status button { width: 38px; height: 20px; }
.status .on { background: #c8c8c8; }
```
